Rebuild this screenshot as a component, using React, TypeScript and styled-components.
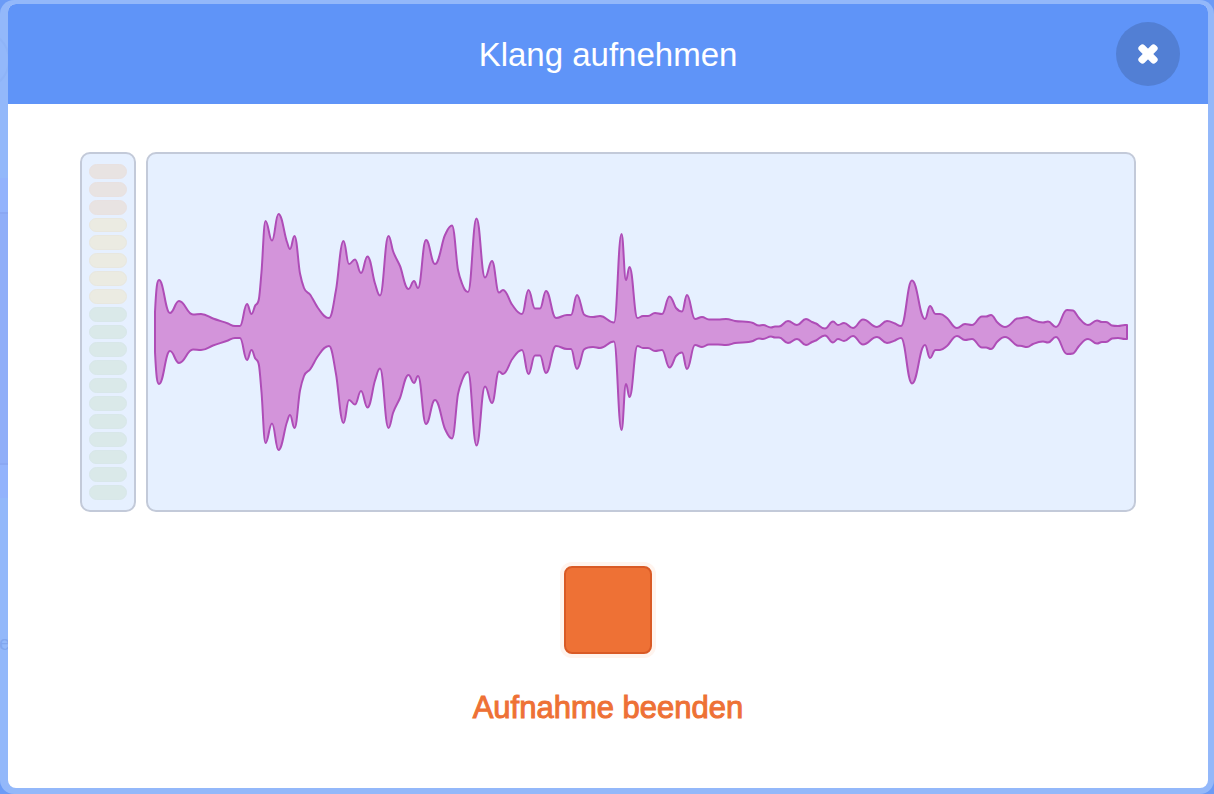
import React from 'react';
import styled, { createGlobalStyle } from 'styled-components';

const GlobalStyle = createGlobalStyle`
  *, *::before, *::after { box-sizing: border-box; }
  body {
    margin: 0;
    background: #6b9bf6;
    font-family: "Liberation Sans", Arial, Helvetica, sans-serif;
  }
`;

const Overlay = styled.div`
  position: relative;
  display: flex;
  min-height: 100vh;
  padding: 4px 6px 6px 8px;
  border-radius: 14px;
  overflow: hidden;
  background-color: #93b8fa;
  background-image: linear-gradient(
    #93b8fa 178px,
    #93b3fc 178px 212px,
    #8ba8f3 212px 214px,
    #90aef8 214px 463px,
    #8ba8f3 463px 465px,
    #93b3fc 465px 498px,
    #93b8fa 498px
  );
  background-size: 8px 100%;
  background-repeat: no-repeat;
`;

const EditorRing = styled.div`
  position: absolute;
  top: 30px;
  left: -50px;
  width: 60px;
  height: 60px;
  border: 2px solid #8fb4f7;
  border-radius: 50%;
`;

const EditorLabel = styled.span`
  position: absolute;
  top: 632px;
  left: -1px;
  font-size: 20px;
  line-height: 22px;
  color: #82a7ee;
`;

const Modal = styled.section`
  position: relative;
  flex: 1;
  display: flex;
  flex-direction: column;
  min-width: 0;
  border-radius: 8px;
  overflow: hidden;
  background: #fff;
`;

const Header = styled.header`
  display: grid;
  grid-template-columns: 1fr auto 1fr;
  align-items: center;
  height: 100px;
  padding: 0 28px;
  background: #5f94f8;
`;

const Title = styled.h1`
  grid-column: 2;
  margin: 0;
  padding-top: 2px;
  font-size: 33px;
  line-height: 40px;
  font-weight: 400;
  color: #fff;
`;

const CloseButton = styled.button`
  justify-self: end;
  display: flex;
  align-items: center;
  justify-content: center;
  width: 64px;
  height: 64px;
  padding: 0;
  border: 0;
  border-radius: 50%;
  background: #527fd4;
  cursor: pointer;
`;

const Body = styled.div`
  display: flex;
  flex-direction: column;
  align-items: center;
  gap: 54px;
  padding: 48px 72px;
`;

const Visualization = styled.div`
  display: flex;
  gap: 10px;
  width: 100%;
  height: 360px;
`;

const Panel = styled.div`
  border: 2px solid #c3cad9;
  border-radius: 10px;
  background: #e6f0ff;
`;

const Meter = styled(Panel)`
  flex: none;
  display: flex;
  flex-direction: column;
  gap: 3px;
  width: 56px;
  padding: 10px 7px;
`;

type Level = 'red' | 'yellow' | 'green';

const levelColors: Record<Level, { fill: string; edge: string }> = {
  red: { fill: '#e8e3e2', edge: '#e8e1e1' },
  yellow: { fill: '#ebebe2', edge: '#e8e7df' },
  green: { fill: '#dae9e9', edge: '#d8e7e9' },
};

const Segment = styled.div<{ $level: Level }>`
  flex: 1;
  border: 1px solid ${({ $level }) => levelColors[$level].edge};
  border-radius: 8px;
  background: ${({ $level }) => levelColors[$level].fill};
`;

const WavePanel = styled(Panel)`
  flex: 1;
  min-width: 0;
`;

const WaveSvg = styled.svg`
  display: block;
  width: 100%;
  height: 100%;
`;

const StopButton = styled.button`
  display: flex;
  flex-direction: column;
  align-items: center;
  gap: 34px;
  padding: 0;
  border: 0;
  background: none;
  font-family: inherit;
  font-size: 31px;
  line-height: 40px;
  font-weight: 400;
  color: #ee7135;
  -webkit-text-stroke: 1px #ee7135;
  cursor: pointer;
`;

const StopSquare = styled.span`
  width: 88px;
  height: 88px;
  border: 2px solid #d95a25;
  border-radius: 8px;
  background: #ee7135;
  box-shadow: 0 0 0 4px #fff4ee;
`;

const segments: Level[] = [
  ...Array<Level>(3).fill('red'),
  ...Array<Level>(5).fill('yellow'),
  ...Array<Level>(11).fill('green'),
];

type Sample = [x: number, amplitude: number];

const samples: Sample[] = [
  [7, 20], [11, 52], [22, 19], [31, 31], [45, 17.5], [53, 18], [65, 13.5], [80, 8.5], [87, 6],
  [92, 6], [99, 28], [103.5, 18], [107, 26], [111, 33.5], [113.5, 60], [117.5, 111], [124, 91.5],
  [130.5, 118], [139, 90], [142, 83], [146.5, 96], [152, 58.5], [156, 44], [162, 37.5], [170, 24],
  [181, 14], [188, 42], [195.5, 91], [201, 68], [207, 72.5], [213, 59], [219.5, 75.5], [227, 48.5],
  [232, 36.5], [240.5, 96], [245, 81], [252, 66], [260.5, 43], [266, 51], [270, 44], [278, 92],
  [287, 68], [297, 97], [304, 106.5], [310, 62], [314, 48.5], [320, 40], [328.5, 113.5], [337, 54.5],
  [344, 71], [351, 39.5], [355, 42], [364, 27.5], [374, 18], [380.5, 42], [387, 23.5], [392, 23.5],
  [398, 41], [408, 14], [419, 17], [423, 17], [429, 37], [436, 17.5], [445, 15], [452, 16],
  [466, 9.5], [473.5, 98], [478, 52], [481.5, 65], [489.5, 14], [495, 16], [500, 16], [507, 19],
  [514, 18], [521.5, 35.5], [528, 24], [534, 20.5], [539, 37], [547, 13], [554, 15], [561, 12.5],
  [570, 12.5], [578, 13], [587, 11], [605, 9], [611, 6.5], [615, 7], [623, 4.5], [627, 5.5],
  [631, 5.5], [640, 11], [649, 7], [658, 13], [664, 10], [668, 8.5], [677, 3.5], [685, 10.5],
  [690, 7], [696, 9], [705, 4], [715, 12.5], [729, 5], [739, 11], [747, 8.5], [753, 6],
  [764, 51.5], [777, 13], [782, 26], [787.5, 18], [792, 18], [799, 14], [809, 4], [817, 8],
  [824, 7], [834, 15.5], [838, 15.5], [843, 17], [849, 10], [857, 5], [869, 13.5], [874, 14],
  [879, 15], [885, 12], [895, 9.5], [900, 10.5], [908, 5], [919, 22], [925, 21.5], [931, 14],
  [940, 7], [949, 11.5], [954, 10], [958, 10], [964, 6.5], [970, 6], [977, 7], [979, 7],
];

// Slope at each sample: flat at local extremes, and limited elsewhere so the curve never overshoots.
function slopes(points: Sample[]): number[] {
  const widths = points.slice(1).map(([x], i) => x - points[i][0]);
  const secants = points.slice(1).map(([, y], i) => (y - points[i][1]) / widths[i]);
  return points.map((_, i) => {
    if (i === 0) return secants[0] * 2.5;
    if (i === points.length - 1) return secants[i - 1];
    const a = secants[i - 1];
    const b = secants[i];
    if (a * b <= 0) return 0;
    const mean = (a * widths[i] + b * widths[i - 1]) / (widths[i] + widths[i - 1]);
    const limit = 3 * Math.min(Math.abs(a), Math.abs(b));
    return Math.sign(a) * Math.min(Math.abs(mean), limit);
  });
}

function wavePath(points: Sample[], middle: number): string {
  const m = slopes(points);
  const curve = (from: number, to: number, sign: number) => {
    const [x0, y0] = points[from];
    const [x1, y1] = points[to];
    // Longer handles at the flat points round off the peaks and valleys.
    const h0 = (x1 - x0) * (m[from] === 0 ? 0.44 : 0.33);
    const h1 = (x1 - x0) * (m[to] === 0 ? 0.44 : 0.33);
    const at = (x: number, y: number) => `${x.toFixed(2)} ${(middle + sign * y).toFixed(2)}`;
    return `C${at(x0 + h0, y0 + m[from] * h0)} ${at(x1 - h1, y1 - m[to] * h1)} ${at(x1, y1)}`;
  };
  const last = points.length - 1;
  let d = `M${points[0][0]} ${middle - points[0][1]}`;
  for (let i = 0; i < last; i += 1) d += curve(i, i + 1, -1);
  d += `L${points[last][0]} ${middle + points[last][1]}`;
  for (let i = last; i > 0; i -= 1) d += curve(i, i - 1, 1);
  return `${d}Z`;
}

const path = wavePath(samples, 178);

export default function App() {
  return (
    <>
      <GlobalStyle />
      <Overlay>
        <EditorRing />
        <EditorLabel aria-hidden="true">e</EditorLabel>
        <Modal role="dialog" aria-labelledby="record-title">
          <Header>
            <Title id="record-title">Klang aufnehmen</Title>
            <CloseButton type="button" aria-label="Schließen">
              <svg width="24" height="24" viewBox="-12 -12 24 24" fill="#fff" aria-hidden="true">
                <g transform="rotate(45)">
                  <rect x="-11.6" y="-3.8" width="23.2" height="7.6" rx="3" />
                  <rect x="-3.8" y="-11.6" width="7.6" height="23.2" rx="3" />
                </g>
              </svg>
            </CloseButton>
          </Header>
          <Body>
            <Visualization>
              <Meter>
                {segments.map((level, i) => (
                  <Segment key={i} $level={level} />
                ))}
              </Meter>
              <WavePanel>
                <WaveSvg viewBox="0 0 986 356" preserveAspectRatio="none" aria-hidden="true">
                  <path
                    d={path}
                    fill="#d394da"
                    stroke="#ae4db7"
                    strokeWidth="2"
                    strokeLinejoin="round"
                    vectorEffect="non-scaling-stroke"
                  />
                </WaveSvg>
              </WavePanel>
            </Visualization>
            <StopButton type="button">
              <StopSquare />
              Aufnahme beenden
            </StopButton>
          </Body>
        </Modal>
      </Overlay>
    </>
  );
}
